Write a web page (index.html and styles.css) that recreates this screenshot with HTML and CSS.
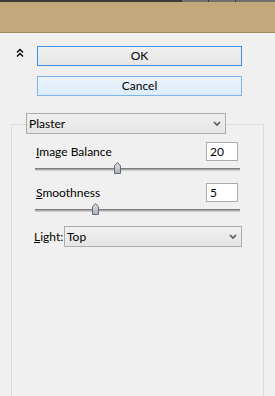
FILE: index.html
```html
<!DOCTYPE html>
<html>
<head>
<meta charset="utf-8">
<meta name="viewport" content="width=device-width, initial-scale=1.0">
<link rel="stylesheet" href="styles.css">
<title>Plaster</title>
</head>
<body>
<div class="top_strip">
	<div class="strip_dark"></div>
	<div class="strip_tab"></div>
	<div class="strip_tab"></div>
	<div class="strip_tab wide"></div>
</div>
<div class="title_bar"></div>

<div class="actions">
	<div class="collapse_icon">
		<svg width="8" height="9" viewBox="0 0 8 9">
			<path d="M1 4.5 L4 1.5 L7 4.5 M1 8.5 L4 5.5 L7 8.5" fill="none" stroke="#000" stroke-width="1.4"/>
		</svg>
	</div>
	<div class="buttons">
		<button class="button ok">OK</button>
		<button class="button cancel">Cancel</button>
	</div>
</div>

<div class="group">
	<div class="dropdown filter_select">
		<span>Plaster</span>
		<svg class="chevron" width="8" height="5" viewBox="0 0 8 5"><path d="M1 1 L4 4 L7 1" fill="none" stroke="#555" stroke-width="1.6"/></svg>
	</div>

	<div class="param">
		<div class="param_head">
			<label><u>I</u>mage Balance</label>
			<input class="num" type="text" value="20">
		</div>
		<div class="slider">
			<div class="track"></div>
			<svg class="thumb" style="left:79px" width="7" height="12" viewBox="0 0 7 12">
				<defs><linearGradient id="tg1" x1="0" y1="0" x2="0" y2="1"><stop offset="0" stop-color="#dfe3ea"/><stop offset="1" stop-color="#a9b0bb"/></linearGradient></defs>
				<path d="M3.5 0.5 L6.5 4 V11.5 H0.5 V4 Z" fill="url(#tg1)" stroke="#656c78"/>
			</svg>
		</div>
	</div>

	<div class="param">
		<div class="param_head">
			<label><u>S</u>moothness</label>
			<input class="num" type="text" value="5">
		</div>
		<div class="slider">
			<div class="track"></div>
			<svg class="thumb" style="left:57px" width="7" height="12" viewBox="0 0 7 12">
				<defs><linearGradient id="tg2" x1="0" y1="0" x2="0" y2="1"><stop offset="0" stop-color="#dfe3ea"/><stop offset="1" stop-color="#a9b0bb"/></linearGradient></defs>
				<path d="M3.5 0.5 L6.5 4 V11.5 H0.5 V4 Z" fill="url(#tg2)" stroke="#656c78"/>
			</svg>
		</div>
	</div>

	<div class="light_row">
		<label class="light_label"><u>L</u>ight:</label>
		<div class="dropdown light_select">
			<span>Top</span>
			<svg class="chevron" width="8" height="5" viewBox="0 0 8 5"><path d="M1 1 L4 4 L7 1" fill="none" stroke="#555" stroke-width="1.6"/></svg>
		</div>
	</div>
</div>
</body>
</html>
```

FILE: styles.css
```css
body {
	margin: 0;
	width: 275px;
	height: 396px;
	overflow: hidden;
	background-color: #f0f0f0;
	font-family: Lato, "Noto Sans", sans-serif;
	font-size: 12px;
	color: #000;
}

.top_strip {
	display: flex;
	height: 2px;
	background-color: #3a3a3a;
}
.strip_dark {
	flex: 1;
}
.strip_tab {
	width: 26px;
	margin-left: 1px;
	background-color: #6f6f6f;
}
.strip_tab.wide {
	width: 39px;
}

.title_bar {
	height: 30px;
	background-color: #c2a87a;
	border-bottom: 1px solid #a58c60;
}

.actions {
	display: flex;
	margin-top: 13px;
}
.collapse_icon {
	width: 37px;
	padding-left: 16px;
	padding-top: 2px;
	box-sizing: border-box;
}
.collapse_icon svg {
	display: block;
}
.buttons {
	display: flex;
	flex-direction: column;
	gap: 10px;
}
.button {
	width: 205px;
	height: 20px;
	box-sizing: border-box;
	padding: 0;
	font-family: inherit;
	font-size: 12px;
	color: #000;
	line-height: 16px;
}
.ok {
	border: 1px solid #3d8ee6;
	background: linear-gradient(#f0f0f0, #e5e5e5);
}
.cancel {
	border: 1px solid #7eb4ea;
	background: linear-gradient(#ecf4fc, #dcecfc);
}

.group {
	margin: 28px 0 0 11px;
	width: 253px;
	height: 272px;
	box-sizing: border-box;
	border: 1px solid #dcdcdc;
	border-bottom: none;
}

.dropdown {
	display: flex;
	align-items: center;
	justify-content: space-between;
	height: 21px;
	box-sizing: border-box;
	border: 1px solid #acacac;
	background: linear-gradient(#f0f0f0, #e5e5e5);
	padding: 0 4px 0 2px;
}
.chevron {
	display: block;
}
.filter_select {
	width: 200px;
	margin: -12px 0 0 14px;
}

.param {
	margin-left: 23px;
	width: 205px;
}
.param_head {
	display: flex;
	align-items: center;
	justify-content: space-between;
	margin-top: 8px;
	padding-left: 1px;
	padding-right: 2px;
}
.num {
	width: 32px;
	height: 19px;
	box-sizing: border-box;
	border: 1px solid #acacac;
	background-color: #fff;
	padding: 0 3px;
	font-family: inherit;
	font-size: 12px;
	color: #000;
}
.param + .param .param_head {
	margin-top: 0;
}

.slider {
	position: relative;
	height: 22px;
}
.track {
	position: relative;
	top: 7px;
	height: 1px;
	border-top: 1px solid #7d7d7d;
	border-bottom: 1px solid #cfcfcf;
	background-color: #a8a8a8;
}
.thumb {
	position: absolute;
	top: 1px;
	display: block;
}

.light_row {
	display: flex;
	align-items: center;
	margin: 2px 0 0 22px;
}
.light_label {
	width: 30px;
}
.light_select {
	width: 178px;
}
```
